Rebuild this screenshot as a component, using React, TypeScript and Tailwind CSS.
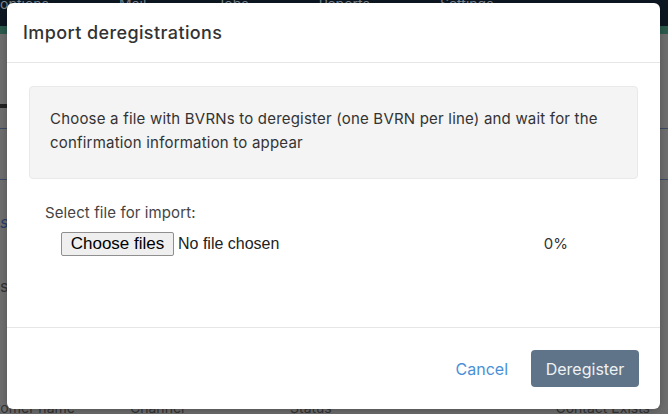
import React from 'react';

const navItems = ['options', 'Mail', 'Jobs', 'Reports', 'Settings'];

export default function App() {
  return (
    <div className="relative w-[668px] h-[414px] overflow-hidden bg-[#6e6e6e] font-['Inter',sans-serif]">
      {/* dimmed page behind the dialog */}
      <div className="flex h-[26px] items-start gap-[70px] bg-[#0c1722] text-[14px] leading-[8px] text-[#7d8690]">
        {navItems.map((n) => (
          <span key={n}>{n}</span>
        ))}
      </div>
      <div className="h-[8px] bg-[#2b5a4c]" />
      <div className="flex h-[380px] flex-col">
        <div className="mt-[70px] h-[4px] w-[20px] bg-[#222]" />
        <div className="mt-[20px] h-px w-full bg-[#3c4a66]" />
        <div className="mt-[50px] h-px w-full bg-[#3c4a66]" />
        <div className="mt-[30px] text-[16px] italic text-[#2c3d6a]">s</div>
        <div className="mt-[40px] text-[16px] text-[#333]">s</div>
        <div className="mt-auto flex text-[14px] leading-[12px] text-[#333]">
          <span className="-ml-[30px] w-[160px]">Customer name</span>
          <span className="w-[160px]">Channel</span>
          <span>Status</span>
          <span className="ml-auto pr-[18px]">Contact Exists</span>
        </div>
      </div>

      {/* dialog */}
      <div className="absolute left-[7px] top-[3px] flex h-[406px] w-[653px] flex-col rounded-[6px] bg-white shadow-[0_2px_8px_rgba(0,0,0,0.25)]">
        <div className="flex h-[60px] items-center border-b border-[#e6e6e6] px-[16px]">
          <h2 className="text-[18px] font-medium tracking-[0.4px] text-[#333]">Import deregistrations</h2>
        </div>

        <div className="flex-1 px-[22px]">
          <div className="mt-[23px] h-[93px] rounded-[4px] border border-[#e9e9e9] bg-[#f4f4f4] pl-[20px] pr-[30px] pt-[20px] text-[15px] leading-[24px] tracking-[0.2px] text-[#333]">
            Choose a file with BVRNs to deregister (one BVRN per line) and wait for the confirmation information to appear
          </div>

          <div className="mt-[24px] pl-[16px] text-[15px] leading-[20px] tracking-[0.1px] text-[#444]">Select file for import:</div>

          <div className="mt-[9px] flex items-center pl-[32px] font-['Liberation_Sans',sans-serif]">
            <span className="flex h-[24px] w-[113px] items-center justify-center rounded-[2px] border border-[#8f8f8f] bg-[#efefef] text-[17px] text-black">
              Choose files
            </span>
            <span className="ml-[4px] text-[16px] text-[#222]">No file chosen</span>
            <span className="ml-auto mr-[70px] font-['Inter',sans-serif] text-[15px] text-[#333]">0%</span>
          </div>
        </div>

        <div className="flex h-[82px] items-center justify-end gap-[23px] border-t border-[#e6e6e6] pr-[21px]">
          <button className="text-[16px] text-[#4a90d6]">Cancel</button>
          <button className="h-[37px] w-[108px] rounded-[4px] bg-[#5f7488] text-[16px] text-[#eef1f4]">Deregister</button>
        </div>
      </div>
    </div>
  );
}
